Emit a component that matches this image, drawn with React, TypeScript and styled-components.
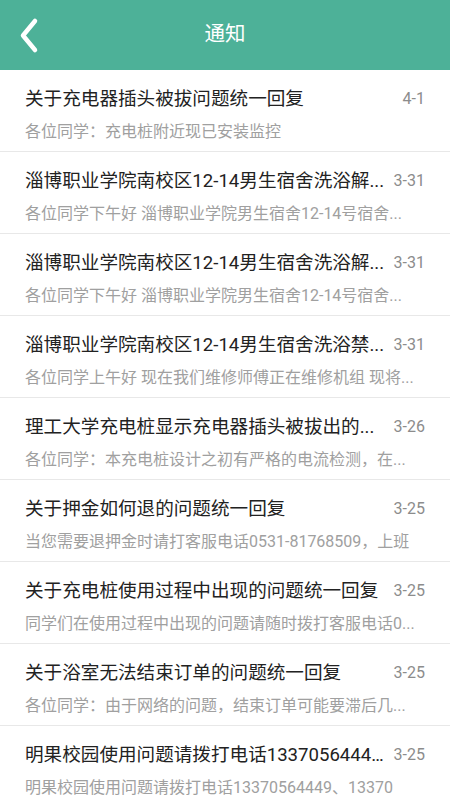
import React from 'react';
import styled, {createGlobalStyle} from 'styled-components';

const GlobalStyle = createGlobalStyle`
    html, body {
        margin: 0;
        padding: 0;
        background-color: #ffffff;
    }
    body {
        font-family: Roboto, "Noto Sans CJK SC", "Noto Sans", sans-serif;
    }
`

const Page = styled.div`
    width: 450px;
    min-height: 800px;
    background-color: #ffffff;
    overflow: hidden;
`
const Header = styled.div`
    height: 70px;
    background-color: #4db198;
    display: flex;
    align-items: center;
    justify-content: center;
    position: relative;
    color: #ffffff;
    font-size: 20.5px;
`
const BackBtn = styled.button`
    position: absolute;
    left: 12px;
    top: 14px;
    width: 36px;
    height: 44px;
    padding: 0;
    border: none;
    background: transparent;
    display: flex;
    align-items: center;
    justify-content: center;
`
const Title = styled.div`
    line-height: 28px;
    margin-top: -2px;
`
const List = styled.div`
    display: flex;
    flex-direction: column;
`
const Row = styled.div`
    padding: 14px 25px 7px 25px;
    border-bottom: solid 1px #e8e8e8;
    display: flex;
    flex-direction: column;
    gap: 6px;
`
const TopLine = styled.div`
    display: flex;
    align-items: center;
    line-height: 30px;
`
const Name = styled.div`
    flex: 1;
    min-width: 0;
    font-size: 18.6px;
    color: #222222;
    white-space: nowrap;
    overflow: hidden;
    text-overflow: ellipsis;
`
const DateText = styled.div`
    margin-left: 8px;
    font-size: 16px;
    color: #8c8c8c;
    flex-shrink: 0;
`
const Desc = styled.div`
    font-size: 16px;
    line-height: 24px;
    color: #a0a0a0;
    white-space: nowrap;
    overflow: hidden;
    text-overflow: ellipsis;
`

const notices = [
    {title: '关于充电器插头被拔问题统一回复', date: '4-1', desc: '各位同学：充电桩附近现已安装监控'},
    {title: '淄博职业学院南校区12-14男生宿舍洗浴解...', date: '3-31', desc: '各位同学下午好 淄博职业学院男生宿舍12-14号宿舍...'},
    {title: '淄博职业学院南校区12-14男生宿舍洗浴解...', date: '3-31', desc: '各位同学下午好 淄博职业学院男生宿舍12-14号宿舍...'},
    {title: '淄博职业学院南校区12-14男生宿舍洗浴禁...', date: '3-31', desc: '各位同学上午好 现在我们维修师傅正在维修机组 现将...'},
    {title: '理工大学充电桩显示充电器插头被拔出的...', date: '3-26', desc: '各位同学：本充电桩设计之初有严格的电流检测，在...'},
    {title: '关于押金如何退的问题统一回复', date: '3-25', desc: '当您需要退押金时请打客服电话0531-81768509，上班'},
    {title: '关于充电桩使用过程中出现的问题统一回复', date: '3-25', desc: '同学们在使用过程中出现的问题请随时拨打客服电话0...'},
    {title: '关于浴室无法结束订单的问题统一回复', date: '3-25', desc: '各位同学：由于网络的问题，结束订单可能要滞后几...'},
    {title: '明果校园使用问题请拨打电话1337056444...', date: '3-25', desc: '明果校园使用问题请拨打电话13370564449、13370'},
];

function App(){
    return(
        <Page>
            <GlobalStyle/>
            <Header>
                <BackBtn>
                    <svg width="36" height="44" viewBox="0 0 36 44">
                        <polyline points="23,7 11,21.5 23,36" fill="none" stroke="#ffffff" strokeWidth="4.5" strokeLinecap="round" strokeLinejoin="round"/>
                    </svg>
                </BackBtn>
                <Title>通知</Title>
            </Header>
            <List>
                {notices.map((n, i) => (
                    <Row key={i}>
                        <TopLine>
                            <Name>{n.title}</Name>
                            <DateText>{n.date}</DateText>
                        </TopLine>
                        <Desc>{n.desc}</Desc>
                    </Row>
                ))}
            </List>
        </Page>
    );
}

export default App;
